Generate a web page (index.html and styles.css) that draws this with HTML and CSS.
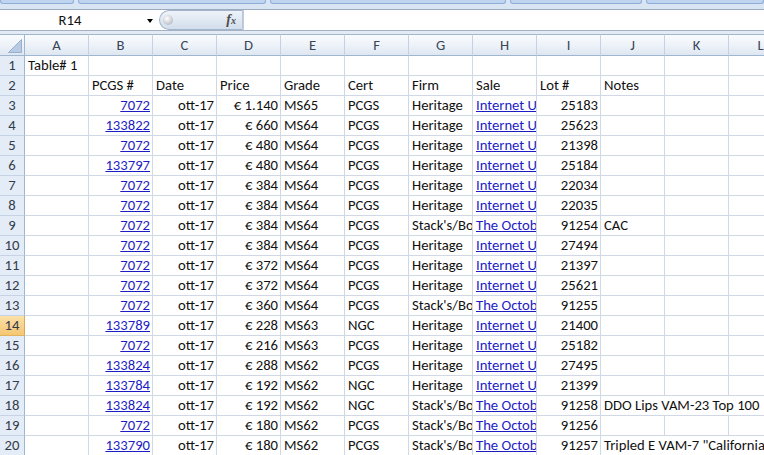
FILE: index.html
```html
<!DOCTYPE html>
<html lang="it">
<head>
    <meta charset="UTF-8">
    <meta name="viewport" content="width=device-width, initial-scale=1.0">
    <title>Morgan dollar - ott-17</title>
    <link rel="stylesheet" href="styles.css">
</head>
<body>
    <div class="ribbon">
        <div class="gruppo g1"></div>
        <div class="gruppo g2"></div>
        <div class="gruppo g3"></div>
        <div class="gruppo g4"></div>
        <div class="gruppo g5"></div>
    </div>

    <div class="barra">
        <div class="nome">R14<span class="freccia"></span></div>
        <div class="pulsante-fx"><span class="pallino"></span><i class="fx">f<small>x</small></i></div>
        <div class="formula"></div>
    </div>
    <div class="spazio"></div>

    <div class="foglio">
        <div class="angolo"><svg width="24" height="21" viewBox="0 0 24 21"><path d="M8.5 17.5 L21.5 17.5 L21.5 4.5 Z" fill="#b9cbe3" stroke="#98afcf"/></svg></div>
        <div class="col">A</div><div class="col">B</div><div class="col">C</div><div class="col">D</div><div class="col">E</div><div class="col">F</div><div class="col">G</div><div class="col">H</div><div class="col">I</div><div class="col">J</div><div class="col">K</div><div class="col">L</div>

        <div class="rh">1</div><div class="c">Table# 1</div><div class="c"></div><div class="c"></div><div class="c"></div><div class="c"></div><div class="c"></div><div class="c"></div><div class="c"></div><div class="c"></div><div class="c"></div><div class="c"></div><div class="c"></div>
        <div class="rh">2</div><div class="c"></div><div class="c">PCGS #</div><div class="c">Date</div><div class="c">Price</div><div class="c">Grade</div><div class="c">Cert</div><div class="c">Firm</div><div class="c">Sale</div><div class="c">Lot #</div><div class="c">Notes</div><div class="c"></div><div class="c"></div>

        <div class="rh">3</div><div class="c"></div><div class="c r"><a href="#">7072</a></div><div class="c r">ott-17</div><div class="c r">€ 1.140</div><div class="c">MS65</div><div class="c">PCGS</div><div class="c">Heritage</div><div class="c"><a href="#">Internet Unlimited</a></div><div class="c r">25183</div><div class="c"></div><div class="c"></div><div class="c"></div>
        <div class="rh">4</div><div class="c"></div><div class="c r"><a href="#">133822</a></div><div class="c r">ott-17</div><div class="c r">€ 660</div><div class="c">MS64</div><div class="c">PCGS</div><div class="c">Heritage</div><div class="c"><a href="#">Internet Unlimited</a></div><div class="c r">25623</div><div class="c"></div><div class="c"></div><div class="c"></div>
        <div class="rh">5</div><div class="c"></div><div class="c r"><a href="#">7072</a></div><div class="c r">ott-17</div><div class="c r">€ 480</div><div class="c">MS64</div><div class="c">PCGS</div><div class="c">Heritage</div><div class="c"><a href="#">Internet Unlimited</a></div><div class="c r">21398</div><div class="c"></div><div class="c"></div><div class="c"></div>
        <div class="rh">6</div><div class="c"></div><div class="c r"><a href="#">133797</a></div><div class="c r">ott-17</div><div class="c r">€ 480</div><div class="c">MS64</div><div class="c">PCGS</div><div class="c">Heritage</div><div class="c"><a href="#">Internet Unlimited</a></div><div class="c r">25184</div><div class="c"></div><div class="c"></div><div class="c"></div>
        <div class="rh">7</div><div class="c"></div><div class="c r"><a href="#">7072</a></div><div class="c r">ott-17</div><div class="c r">€ 384</div><div class="c">MS64</div><div class="c">PCGS</div><div class="c">Heritage</div><div class="c"><a href="#">Internet Unlimited</a></div><div class="c r">22034</div><div class="c"></div><div class="c"></div><div class="c"></div>
        <div class="rh">8</div><div class="c"></div><div class="c r"><a href="#">7072</a></div><div class="c r">ott-17</div><div class="c r">€ 384</div><div class="c">MS64</div><div class="c">PCGS</div><div class="c">Heritage</div><div class="c"><a href="#">Internet Unlimited</a></div><div class="c r">22035</div><div class="c"></div><div class="c"></div><div class="c"></div>
        <div class="rh">9</div><div class="c"></div><div class="c r"><a href="#">7072</a></div><div class="c r">ott-17</div><div class="c r">€ 384</div><div class="c">MS64</div><div class="c">PCGS</div><div class="c">Stack's/Bowers</div><div class="c"><a href="#">The October Baltimore</a></div><div class="c r">91254</div><div class="c">CAC</div><div class="c"></div><div class="c"></div>
        <div class="rh">10</div><div class="c"></div><div class="c r"><a href="#">7072</a></div><div class="c r">ott-17</div><div class="c r">€ 384</div><div class="c">MS64</div><div class="c">PCGS</div><div class="c">Heritage</div><div class="c"><a href="#">Internet Unlimited</a></div><div class="c r">27494</div><div class="c"></div><div class="c"></div><div class="c"></div>
        <div class="rh">11</div><div class="c"></div><div class="c r"><a href="#">7072</a></div><div class="c r">ott-17</div><div class="c r">€ 372</div><div class="c">MS64</div><div class="c">PCGS</div><div class="c">Heritage</div><div class="c"><a href="#">Internet Unlimited</a></div><div class="c r">21397</div><div class="c"></div><div class="c"></div><div class="c"></div>
        <div class="rh">12</div><div class="c"></div><div class="c r"><a href="#">7072</a></div><div class="c r">ott-17</div><div class="c r">€ 372</div><div class="c">MS64</div><div class="c">PCGS</div><div class="c">Heritage</div><div class="c"><a href="#">Internet Unlimited</a></div><div class="c r">25621</div><div class="c"></div><div class="c"></div><div class="c"></div>
        <div class="rh">13</div><div class="c"></div><div class="c r"><a href="#">7072</a></div><div class="c r">ott-17</div><div class="c r">€ 360</div><div class="c">MS64</div><div class="c">PCGS</div><div class="c">Stack's/Bowers</div><div class="c"><a href="#">The October Baltimore</a></div><div class="c r">91255</div><div class="c"></div><div class="c"></div><div class="c"></div>
        <div class="rh sel">14</div><div class="c"></div><div class="c r"><a href="#">133789</a></div><div class="c r">ott-17</div><div class="c r">€ 228</div><div class="c">MS63</div><div class="c">NGC</div><div class="c">Heritage</div><div class="c"><a href="#">Internet Unlimited</a></div><div class="c r">21400</div><div class="c"></div><div class="c"></div><div class="c"></div>
        <div class="rh">15</div><div class="c"></div><div class="c r"><a href="#">7072</a></div><div class="c r">ott-17</div><div class="c r">€ 216</div><div class="c">MS63</div><div class="c">PCGS</div><div class="c">Heritage</div><div class="c"><a href="#">Internet Unlimited</a></div><div class="c r">25182</div><div class="c"></div><div class="c"></div><div class="c"></div>
        <div class="rh">16</div><div class="c"></div><div class="c r"><a href="#">133824</a></div><div class="c r">ott-17</div><div class="c r">€ 288</div><div class="c">MS62</div><div class="c">PCGS</div><div class="c">Heritage</div><div class="c"><a href="#">Internet Unlimited</a></div><div class="c r">27495</div><div class="c"></div><div class="c"></div><div class="c"></div>
        <div class="rh">17</div><div class="c"></div><div class="c r"><a href="#">133784</a></div><div class="c r">ott-17</div><div class="c r">€ 192</div><div class="c">MS62</div><div class="c">NGC</div><div class="c">Heritage</div><div class="c"><a href="#">Internet Unlimited</a></div><div class="c r">21399</div><div class="c"></div><div class="c"></div><div class="c"></div>
        <div class="rh">18</div><div class="c"></div><div class="c r"><a href="#">133824</a></div><div class="c r">ott-17</div><div class="c r">€ 192</div><div class="c">MS62</div><div class="c">NGC</div><div class="c">Stack's/Bowers</div><div class="c"><a href="#">The October Baltimore</a></div><div class="c r">91258</div><div class="c note">DDO Lips VAM-23 Top 100</div>
        <div class="rh">19</div><div class="c"></div><div class="c r"><a href="#">7072</a></div><div class="c r">ott-17</div><div class="c r">€ 180</div><div class="c">MS62</div><div class="c">PCGS</div><div class="c">Stack's/Bowers</div><div class="c"><a href="#">The October Baltimore</a></div><div class="c r">91256</div><div class="c"></div><div class="c"></div><div class="c"></div>
        <div class="rh">20</div><div class="c"></div><div class="c r"><a href="#">133790</a></div><div class="c r">ott-17</div><div class="c r">€ 180</div><div class="c">MS62</div><div class="c">PCGS</div><div class="c">Stack's/Bowers</div><div class="c"><a href="#">The October Baltimore</a></div><div class="c r">91257</div><div class="c note">Tripled E VAM-7 "California Hot Lips"</div>
    </div>
</body>
</html>
```

FILE: styles.css
```css
body {
    margin: 0;
    overflow: hidden;
    background: #fff;
    font-family: Calibri, Carlito, Lato, sans-serif;
    font-size: 14.67px;
    color: #111;
}

/* fondo del ribbon */
.ribbon {
    display: flex;
    gap: 4px;
    height: 9px;
    background: #dae5f3;
}

.gruppo {
    height: 3px;
    background: #bed4ef;
    border: 1px solid #8fafd9;
    border-top: 0;
    border-radius: 0 0 3px 3px;
}

.g1 { width: 74px; }
.g2 { width: 193px; }
.g3 { width: 242px; }
.g4 { width: 134px; }
.g5 { width: 120px; }

/* barra della formula */
.barra {
    display: flex;
    height: 22px;
    box-sizing: border-box;
    border-top: 1px solid #9aabc2;
    border-bottom: 1px solid #a3b2c6;
    background: #fff;
}

.nome {
    position: relative;
    width: 155px;
    padding-right: 15px;
    box-sizing: border-box;
    text-align: center;
    line-height: 21px;
}

.freccia {
    position: absolute;
    left: 147px;
    top: 9px;
    border-top: 4px solid #000;
    border-left: 3.5px solid transparent;
    border-right: 3.5px solid transparent;
}

.pulsante-fx {
    display: flex;
    align-items: center;
    justify-content: space-between;
    width: 84px;
    margin-left: 4px;
    padding: 0 6px 0 3px;
    box-sizing: border-box;
    border: 1px solid #a4b4ca;
    border-right-color: #b9c6d8;
    border-radius: 10px 0 0 10px;
    background: linear-gradient(#eef3f9, #d3deec);
}

.pallino {
    width: 10px;
    height: 10px;
    border-radius: 50%;
    background: radial-gradient(circle at 40% 35%, #fff, #c8ccd2 60%, #9ea5ae);
}

.fx {
    font-family: "Liberation Serif", serif;
    font-weight: bold;
    font-size: 14px;
    color: #4d4d4d;
}

.fx small {
    font-size: 10px;
}

.formula {
    flex: 1;
    border-left: 1px solid #c2cddb;
}

.spazio {
    height: 3px;
    background: #e3eaf4;
}

/* foglio */
.foglio {
    display: grid;
    grid-template-columns: 25px repeat(12, 64px);
    grid-template-rows: 22px;
    grid-auto-rows: 20px;
}

.angolo,
.col {
    box-sizing: border-box;
    border-top: 1px solid #9eb6ce;
    border-bottom: 1px solid #9eb6ce;
    background: linear-gradient(#f9fbfd, #eef3f9 50%, #dde6f1);
}

.angolo {
    border-right: 1px solid #9eb6ce;
}

.angolo svg {
    display: block;
}

.col {
    border-right: 1px solid #c4d1e2;
    text-align: center;
    line-height: 21px;
    color: #3a4658;
}

.rh {
    box-sizing: border-box;
    border-right: 1px solid #9eb6ce;
    border-bottom: 1px solid #c5d3e5;
    background: #e4ecf7;
    text-align: center;
    line-height: 19px;
    color: #333c48;
}

.rh.sel {
    background: linear-gradient(#fbe0a8, #f4c773);
    border-bottom-color: #e3b25e;
    border-right-color: #d9a850;
}

.c {
    box-sizing: border-box;
    border-right: 1px solid #d0d7e5;
    border-bottom: 1px solid #d0d7e5;
    padding: 0 2px 0 3px;
    line-height: 19px;
    white-space: nowrap;
    overflow: hidden;
}

.r {
    text-align: right;
}

.note {
    grid-column: span 3;
}

.c a {
    color: #1c1cc4;
    text-decoration: underline;
}
```
